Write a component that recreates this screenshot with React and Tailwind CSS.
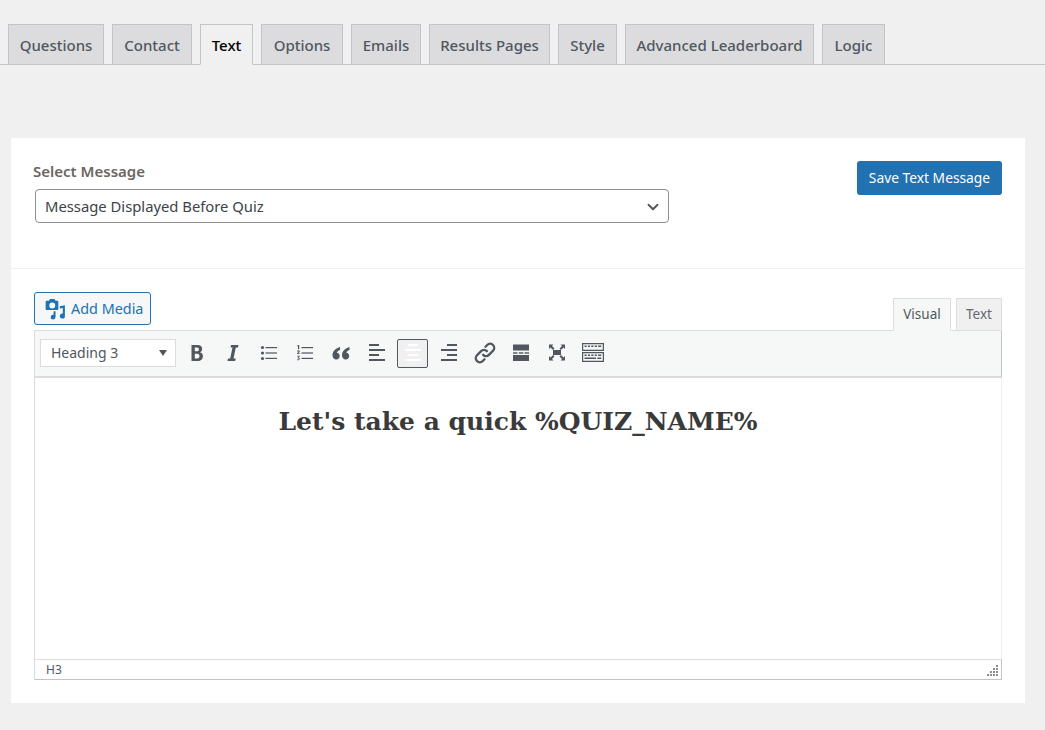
import React from 'react';
import { ChevronDown } from 'lucide-react';

const tabs = [
    { name: 'Questions', w: 'w-[96px]' },
    { name: 'Contact', w: 'w-[80px]' },
    { name: 'Text', w: 'w-[53px]', active: true },
    { name: 'Options', w: 'w-[82px]' },
    { name: 'Emails', w: 'w-[70px]' },
    { name: 'Results Pages', w: 'w-[121px]' },
    { name: 'Style', w: 'w-[59px]' },
    { name: 'Advanced Leaderboard', w: 'w-[189px]' },
    { name: 'Logic', w: 'w-[63px]' },
];

// Toolbar glyphs, all on a 20x20 box like the wp dashicons
const Bold = () => (
    <path
        fillRule="evenodd"
        d="M4.500 2h6c3 0 4.700 1.500 4.700 3.900 0 1.600-.9 2.800-2.300 3.300 1.800.4 3 1.800 3 3.800 0 3-2 5-5.200 5H4.500V2zm3.300 2.600v3.600H10c1.200 0 1.900-.7 1.900-1.800S11.200 4.600 10 4.600H7.800zm0 6.100v4.700h2.500c1.400 0 2.200-.9 2.200-2.300s-.8-2.400-2.200-2.400H7.800z"
    />
);
const Italic = () => <path d="M8 2h7.500L15 4.500h-2.200l-2.300 11h2.200l-.5 2.500H4.500l.5-2.500h2.200l2.300-11H7.500L8 2z" />;
const BulletList = () => (
    <>
        <circle cx="3.500" cy="4.500" r="1.600" />
        <circle cx="3.500" cy="10" r="1.600" />
        <circle cx="3.500" cy="15.500" r="1.600" />
        <rect x="6.500" y="4" width="11.500" height="1.200" />
        <rect x="6.500" y="9.400" width="11.500" height="1.200" />
        <rect x="6.500" y="14.800" width="11.500" height="1.200" />
    </>
);
const NumberList = () => (
    <>
        <path d="M3 2h1.200v4.300H3V3.200h-.8v-.6L3 2z" />
        <path d="M2.100 7.600h2.600v.9L3.500 10.200h1.300v.8H2.100v-.8l1.500-1.700H2.100v-.9z" />
        <path d="M2.100 12.800h2.600v.8l-1 1.100c.7.100 1.100.5 1.100 1.100 0 .9-.8 1.500-1.600 1.500-.5 0-.9-.1-1.200-.3v-.8c.3.200.7.300 1.100.3.400 0 .7-.2.700-.6 0-.4-.4-.6-1.100-.6v-.6l1-1.100H2.100v-.8z" />
        <rect x="6.500" y="4" width="11.500" height="1.200" />
        <rect x="6.500" y="9.400" width="11.500" height="1.200" />
        <rect x="6.500" y="14.800" width="11.500" height="1.200" />
    </>
);
const Quote = () => (
    <path d="M9 4C5 5 1.500 8.200 1.500 12.200c0 2.500 1.500 4.300 3.800 4.300 2 0 3.400-1.500 3.400-3.400 0-1.800-1.200-3.100-2.900-3.300.4-1.400 1.500-2.400 3.200-2.900V4zm9.500 0c-4 1-7.500 4.200-7.500 8.200 0 2.500 1.500 4.300 3.800 4.300 2 0 3.400-1.500 3.400-3.400 0-1.800-1.200-3.100-2.900-3.300.4-1.400 1.500-2.400 3.200-2.900V4z" />
);
const AlignLeft = () => (
    <>
        <rect x="2" y="1" width="10" height="2" />
        <rect x="2" y="6" width="16" height="2" />
        <rect x="2" y="11" width="10" height="2" />
        <rect x="2" y="16" width="16" height="2" />
    </>
);
const AlignCenter = () => (
    <>
        <rect x="5" y="1" width="10" height="2" />
        <rect x="2" y="6" width="16" height="2" />
        <rect x="5" y="11" width="10" height="2" />
        <rect x="2" y="16" width="16" height="2" />
    </>
);
const AlignRight = () => (
    <>
        <rect x="8" y="1" width="10" height="2" />
        <rect x="2" y="6" width="16" height="2" />
        <rect x="8" y="11" width="10" height="2" />
        <rect x="2" y="16" width="16" height="2" />
    </>
);
const LinkIcon = () => (
    <g
        fill="none"
        stroke="currentColor"
        strokeWidth="1.900"
        strokeLinecap="round"
        transform="translate(10 10) scale(1.250) translate(-10 -10)"
    >
        <path d="M8.500 11.500a3.200 3.200 0 0 0 4.600 0l3.300-3.300a3.250 3.250 0 0 0-4.600-4.600L10.400 5" />
        <path d="M11.500 8.500a3.200 3.200 0 0 0-4.600 0l-3.300 3.300a3.250 3.250 0 0 0 4.600 4.600L9.600 15" />
    </g>
);
const ReadMore = () => (
    <>
        <rect x="2" y="1.500" width="16" height="6" />
        <rect x="2" y="9.300" width="4.500" height="1.400" />
        <rect x="7.800" y="9.300" width="4.500" height="1.400" />
        <rect x="13.500" y="9.300" width="4.500" height="1.400" />
        <rect x="2" y="12" width="16" height="6" />
    </>
);
const Fullscreen = () => (
    <>
        <rect x="6" y="7" width="8" height="5" />
        <path d="M2 1.500h4.500L5 3l2.500 2.500L6 7 3.500 4.500 2 6V1.500zM18 1.500V6l-1.500-1.500L14 7l-1.500-1.500L15 3l-1.500-1.500H18zM2 17.500V13l1.500 1.500L6 12l1.500 1.500L5 16l1.500 1.500H2zM18 17.500h-4.500L15 16l-2.500-2.500L14 12l2.500 2.500L18 13v4.500z" />
    </>
);
const Kitchen = () => (
    <path
        fillRule="evenodd"
        d="M-1 0h22v8H-1V0zm1.200 1.200v5.600h19.600V1.200H.2zM1.500 2.500h2.200V4H1.500V2.500zm3.400 0h2.200V4H4.900V2.500zm3.400 0h2.200V4H8.300V2.500zm3.400 0h2.200V4h-2.200V2.500zm3.400 0h3.200V4h-3.200V2.500zM-1 9h22v10H-1V9zm1.200 1.200v7.600h19.600v-7.600H.2zM1.500 11.500h2.200V13H1.500v-1.500zm3.400 0h2.200V13H4.900v-1.500zm3.400 0h2.200V13H8.300v-1.500zm3.400 0h2.200V13h-2.200v-1.500zm3.400 0h3.200V13h-3.200v-1.500zM1.500 14.500h11.500V16H1.500v-1.500zm12.800 0h4V16h-4v-1.500z"
    />
);

const tools = [
    { id: 'bold', Icon: Bold },
    { id: 'italic', Icon: Italic },
    { id: 'ul', Icon: BulletList },
    { id: 'ol', Icon: NumberList },
    { id: 'quote', Icon: Quote },
    { id: 'left', Icon: AlignLeft },
    { id: 'center', Icon: AlignCenter, active: true },
    { id: 'right', Icon: AlignRight },
    { id: 'link', Icon: LinkIcon },
    { id: 'more', Icon: ReadMore },
    { id: 'full', Icon: Fullscreen },
    { id: 'kitchen', Icon: Kitchen },
];

function ToolButton({ Icon, active }) {
    return (
        <button
            className={
                'flex items-center justify-center rounded-[2px] border ' +
                (active
                    ? 'w-[31px] h-[29px] mr-px border-[#50575e] bg-[#f0f0f1] text-white'
                    : 'w-[32px] h-[30px] border-transparent text-[#50575e]')
            }
        >
            <svg viewBox="0 0 20 20" className="w-[20px] h-[20px] overflow-visible" fill="currentColor">
                <Icon />
            </svg>
        </button>
    );
}

function App() {
    return (
        <div className="w-[1045px] h-[730px] overflow-hidden bg-[#f0f0f1] font-['Noto_Sans',sans-serif] text-[#3c434a]">
            <div className="h-[65px] pt-[24px] pl-[8px] flex gap-[8px] border-b border-[#c3c4c7]">
                {tabs.map((tab) => (
                    <div
                        key={tab.name}
                        className={
                            'h-[41px] pt-px shrink-0 flex items-center justify-center border border-[#c3c4c7] text-[15px] font-medium ' +
                            tab.w +
                            (tab.active
                                ? ' bg-[#f0f0f1] border-b-[#f0f0f1] text-black'
                                : ' bg-[#dcdcde] text-[#50575e]')
                        }
                    >
                        {tab.name}
                    </div>
                ))}
            </div>

            <div className="mt-[73px] ml-[11px] w-[1014px] h-[565px] bg-white">
                <div className="h-[131px] border-b border-[#f0f0f1] pl-[22px] pr-[23px] pt-[23px] flex justify-between">
                    <div>
                        <div className="text-[15px] leading-[20px] font-semibold text-[#6b6762]">Select Message</div>
                        <div className="mt-[8px] ml-[2px] w-[634px] h-[34px] border border-[#8c8f94] rounded-[4px] pl-[9px] pr-[6px] pt-px flex items-center justify-between text-[14.800px] text-[#3c434a]">
                            <span>Message Displayed Before Quiz</span>
                            <ChevronDown size={18} strokeWidth={2.500} className="text-[#50575e]" />
                        </div>
                    </div>
                    <button className="w-[145px] h-[34px] bg-[#2271b1] rounded-[3px] text-white text-[13.800px]">
                        Save Text Message
                    </button>
                </div>

                <div className="pl-[23px] pr-[23px] pt-[23px]">
                    <div className="h-[38px] flex justify-between">
                        <button className="w-[117px] h-[33px] pl-[9px] border border-[#2271b1] rounded-[3px] bg-[#f6f7f7] text-[#2271b1] text-[14.400px] flex items-center gap-[5px]">
                            <svg viewBox="0 0 20 20" className="w-[22px] h-[22px]" fill="currentColor">
                                <path fillRule="evenodd" d="M2.500 2.500h2L5.500 1h4l1 1.500H12c.6 0 1 .4 1 1V10c0 .6-.4 1-1 1H2.500c-.6 0-1-.4-1-1V3.500c0-.6.4-1 1-1zm5 1.700a2.700 2.700 0 1 0 0 5.400 2.700 2.700 0 0 0 0-5.400z" />
                                <path d="M19 6.500v9.800a2.300 2.300 0 1 1-1.900-2.200V9l-2.700.6V7.500z" />
                                <path d="M10.500 12v5.300a2.200 2.200 0 1 1-1.800-2.100v-3.200z" />
                            </svg>
                            Add Media
                        </button>
                        <div className="flex items-end gap-[5px] -mb-px z-10">
                            <div className="h-[33px] w-[58px] pb-px bg-[#f6f7f7] border border-[#dcdcde] border-b-[#f6f7f7] flex items-center justify-center text-[13.500px] text-[#50575e]">
                                Visual
                            </div>
                            <div className="h-[33px] w-[46px] pb-px bg-[#f0f0f1] border border-[#dcdcde] flex items-center justify-center text-[13.500px] text-[#646970]">
                                Text
                            </div>
                        </div>
                    </div>

                    <div className="h-[350px] w-[968px] border-l border-[#dcdcde] flex flex-col">
                        <div className="h-[48px] shrink-0 bg-[#f6f7f7] border-t border-r border-r-[#c3c4c7] border-t-[#dcdcde] border-b-2 border-b-[#dcdcde] pl-[5px] pb-[1px] flex items-center gap-[4px]">
                            <div className="w-[136px] h-[28px] pb-px mr-px bg-white border border-[#dcdcde] pl-[10px] pr-[8px] flex items-center justify-between text-[14px] text-[#50575e]">
                                <span>Heading 3</span>
                                <span className="w-0 h-0 border-x-[4px] border-x-transparent border-t-[6px] border-t-[#50575e]" />
                            </div>
                            {tools.map((tool) => (
                                <ToolButton key={tool.id} Icon={tool.Icon} active={tool.active} />
                            ))}
                        </div>
                        <div className="flex-1 bg-white border-r border-[#f0f0f1] pt-[27px] text-center font-['DejaVu_Serif',serif] font-bold text-[25px] leading-[34px] text-[#3a3a3a]">
                            Let's take a quick %QUIZ_NAME%
                        </div>
                        <div className="h-[21px] shrink-0 border-t border-r border-b border-t-[#dcdcde] border-r-[#c3c4c7] border-b-[#c3c4c7] pl-[11px] pr-[2px] flex items-center justify-between text-[12px] text-[#50575e]">
                            <span>H3</span>
                            <svg viewBox="0 0 12 12" className="w-[12px] h-[12px]" fill="#8c8f94">
                                <rect x="9" y="1" width="2" height="2" />
                                <rect x="6" y="4" width="2" height="2" />
                                <rect x="9" y="4" width="2" height="2" />
                                <rect x="3" y="7" width="2" height="2" />
                                <rect x="6" y="7" width="2" height="2" />
                                <rect x="9" y="7" width="2" height="2" />
                                <rect x="0" y="10" width="2" height="2" />
                                <rect x="3" y="10" width="2" height="2" />
                                <rect x="6" y="10" width="2" height="2" />
                                <rect x="9" y="10" width="2" height="2" />
                            </svg>
                        </div>
                    </div>
                </div>
            </div>
        </div>
    );
}

export default App;
